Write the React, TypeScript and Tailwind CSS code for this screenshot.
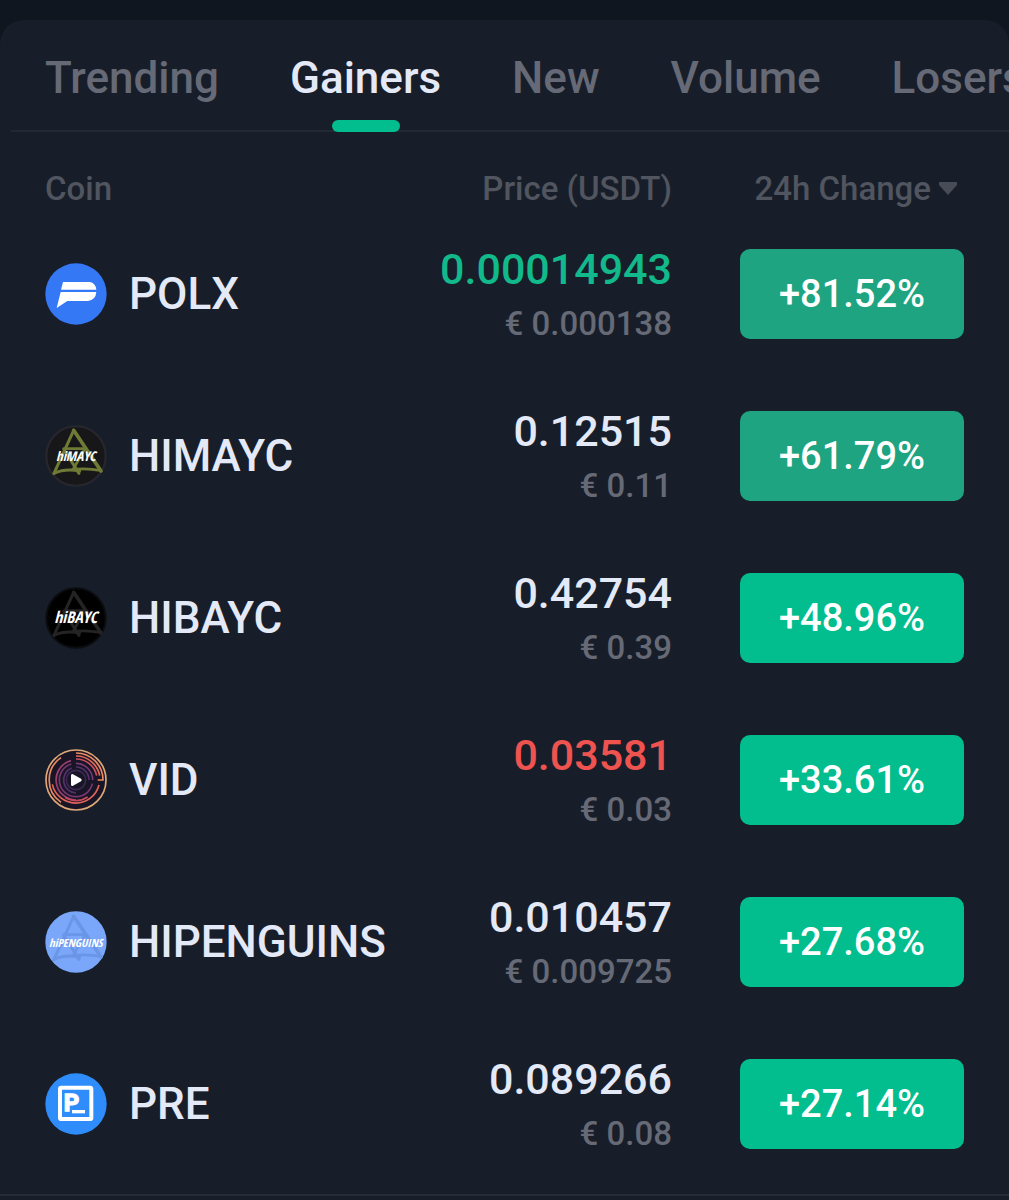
import { useState } from "react";
import type { ReactNode } from "react";

interface Coin {
  symbol: string;
  price: string;
  fiat: string;
  change: string;
  priceClass: string;
  badgeClass: string;
  icon: ReactNode;
}

const TABS = ["Trending", "Gainers", "New", "Volume", "Losers"];

function IconFrame({ children }: { children: ReactNode }) {
  return (
    <svg viewBox="0 0 186 186" className="size-[62px] shrink-0" aria-hidden="true">
      {children}
    </svg>
  );
}

function PolxIcon() {
  return (
    <IconFrame>
      <circle cx="93" cy="93" r="92" fill="#3478f6" />
      <path d="M54 57H134Q152 60 154 80H48Z" fill="#fff" />
      <path d="M47 87H154Q152 111 129 114H67L35 135Z" fill="#fff" />
    </IconFrame>
  );
}

function TriangleMark({ color }: { color: string }) {
  return (
    <g fill="none" stroke={color} strokeLinejoin="round" strokeLinecap="round">
      <path d="M86 16L27 145" strokeWidth="9" />
      <path d="M86 16L168 138" strokeWidth="11" />
      <path d="M27 145Q60 130 104 138" strokeWidth="9" />
      <path d="M82 134Q120 128 166 136" strokeWidth="8" />
      <path d="M56 72L102 145" strokeWidth="9" />
      <path d="M58 71H120L86 130" strokeWidth="8" />
    </g>
  );
}

function HiIcon({ fill, ring, mark, size, label }: { fill: string; ring: string; mark: string; size: number; label: string }) {
  return (
    <IconFrame>
      <circle cx="93" cy="93" r="89" fill={fill} stroke={ring} strokeWidth="6" />
      <TriangleMark color={mark} />
      <text
        x="92"
        y="107"
        textAnchor="middle"
        fill="#fff"
        fontSize={size}
        fontStyle="italic"
        fontWeight="700"
        fontFamily='"Liberation Sans Narrow", "Open Sans Condensed", Lato, sans-serif'
      >
        {label}
      </text>
    </IconFrame>
  );
}

function VidIcon() {
  return (
    <IconFrame>
      <circle cx="93" cy="93" r="90" fill="#181626" stroke="#e0a878" strokeWidth="5" />
      <g fill="none" strokeWidth="5">
        <path d="M93 12A81 81 0 0 1 174 93H158" stroke="#ea8a62" />
        <path d="M93 21A72 72 0 0 1 164 80" stroke="#df6a5a" />
        <path d="M93 30A63 63 0 0 1 155 80" stroke="#c9505f" />
        <path d="M48 26A81 81 0 0 0 48 160" stroke="#ea8a62" />
        <path d="M22 106A72 72 0 0 0 162 108" stroke="#e0655a" />
        <path d="M78 35A60 60 0 0 0 93 153" stroke="#9c3f70" />
        <path d="M60 145A62 62 0 0 0 128 144" stroke="#c9485c" />
        <path d="M93 43A50 50 0 0 1 143 93" stroke="#7a3a78" />
        <path d="M79 45A50 50 0 0 0 93 143A50 50 0 0 0 142 104" stroke="#7a3672" />
        <path d="M93 54A39 39 0 0 1 132 93" stroke="#56306a" />
        <path d="M80 57A39 39 0 0 0 93 132" stroke="#56306a" />
        <circle cx="93" cy="93" r="29" stroke="#3a2850" />
      </g>
      <path d="M82 79V107L106 93Z" fill="#fff" stroke="#fff" strokeWidth="8" strokeLinejoin="round" />
    </IconFrame>
  );
}

function PreIcon() {
  return (
    <IconFrame>
      <circle cx="93" cy="93" r="92" fill="#2f8dfb" />
      <rect x="45" y="44" width="94" height="94" rx="4" fill="none" stroke="#fff" strokeWidth="12" />
      <text x="56" y="113" fill="#fff" stroke="#fff" strokeWidth="4" fontSize="72" fontWeight="700" fontFamily="Roboto, sans-serif">
        P
      </text>
      <path d="M81 116H120" stroke="#fff" strokeWidth="10" />
    </IconFrame>
  );
}

const COINS: Coin[] = [
  {
    symbol: "POLX",
    price: "0.00014943",
    fiat: "€ 0.000138",
    change: "+81.52%",
    priceClass: "text-[#11b98b]",
    badgeClass: "bg-[#1ea480]",
    icon: <PolxIcon />,
  },
  {
    symbol: "HIMAYC",
    price: "0.12515",
    fiat: "€ 0.11",
    change: "+61.79%",
    priceClass: "text-[#e4e9f7]",
    badgeClass: "bg-[#1ea480]",
    icon: <HiIcon fill="#17171a" ring="#29272e" mark="#6f7a35" size={40} label="hiMAYC" />,
  },
  {
    symbol: "HIBAYC",
    price: "0.42754",
    fiat: "€ 0.39",
    change: "+48.96%",
    priceClass: "text-[#e4e9f7]",
    badgeClass: "bg-[#02bd8e]",
    icon: <HiIcon fill="#000" ring="#0b0c10" mark="#242424" size={48} label="hiBAYC" />,
  },
  {
    symbol: "VID",
    price: "0.03581",
    fiat: "€ 0.03",
    change: "+33.61%",
    priceClass: "text-[#ef5350]",
    badgeClass: "bg-[#02bd8e]",
    icon: <VidIcon />,
  },
  {
    symbol: "HIPENGUINS",
    price: "0.010457",
    fiat: "€ 0.009725",
    change: "+27.68%",
    priceClass: "text-[#e4e9f7]",
    badgeClass: "bg-[#02bd8e]",
    icon: <HiIcon fill="#7aa7f9" ring="#7aa7f9" mark="#6b95e6" size={34} label="hiPENGUINS" />,
  },
  {
    symbol: "PRE",
    price: "0.089266",
    fiat: "€ 0.08",
    change: "+27.14%",
    priceClass: "text-[#e4e9f7]",
    badgeClass: "bg-[#02bd8e]",
    icon: <PreIcon />,
  },
];

function CoinRow({ coin }: { coin: Coin }) {
  return (
    <tr className="h-[162px]">
      <td className="p-0">
        <div className="flex items-center gap-[22px] text-[44px] leading-[60px] text-[#e4e9f7]">
          {coin.icon}
          <span>{coin.symbol}</span>
        </div>
      </td>
      <td className="p-0 text-right">
        <div className={`text-[43px] leading-[60px] ${coin.priceClass}`}>{coin.price}</div>
        <div className="text-[33px] leading-[50px] text-[#666a76]">{coin.fiat}</div>
      </td>
      <td className="p-0">
        <div
          className={`ml-auto flex h-[90px] w-[224px] items-center justify-center rounded-[10px] text-[38px] text-white ${coin.badgeClass}`}
        >
          {coin.change}
        </div>
      </td>
    </tr>
  );
}

export default function App() {
  const [active, setActive] = useState("Gainers");

  return (
    <div className="flex min-h-screen flex-col overflow-hidden bg-[#0f161f] pt-5 font-[Roboto,sans-serif] font-medium">
      <main className="flex-1 rounded-t-[24px] bg-[#181e29]">
        <nav className="ml-[11px] flex gap-[71px] overflow-hidden pl-[34px] shadow-[inset_0_-2px_#232934]">
          {TABS.map((tab) => (
            <button
              key={tab}
              type="button"
              onClick={() => setActive(tab)}
              className={`flex h-[112px] shrink-0 flex-col items-center justify-between pt-7 text-[44px] leading-[60px] ${
                tab === active ? "text-[#e4e9f7]" : "text-[#666a76]"
              }`}
            >
              {tab}
              {tab === active && <span className="h-3 w-[68px] rounded-full bg-[#02bd8e]" />}
            </button>
          ))}
        </nav>

        <div className="border-b-2 border-[#262c37] px-[45px] pb-[9px]">
          <table className="w-full border-collapse">
            <thead>
              <tr className="h-[81px] text-[33px] leading-[48px] text-[#50555f]">
                <th className="p-0 pt-8 text-left font-medium">Coin</th>
                <th className="p-0 pt-8 text-right font-medium">Price (USDT)</th>
                <th className="w-[292px] p-0 pt-8 text-right font-medium">
                  <button type="button" className="mr-[7px] inline-flex items-center gap-2">
                    24h Change
                    <svg viewBox="0 0 18 13" className="h-[13px] w-[18px]" aria-hidden="true">
                      <path d="M0 0H18V3L9 13L0 3Z" fill="#474c57" />
                    </svg>
                  </button>
                </th>
              </tr>
            </thead>
            <tbody>
              {COINS.map((coin) => (
                <CoinRow key={coin.symbol} coin={coin} />
              ))}
            </tbody>
          </table>
        </div>
      </main>
    </div>
  );
}
